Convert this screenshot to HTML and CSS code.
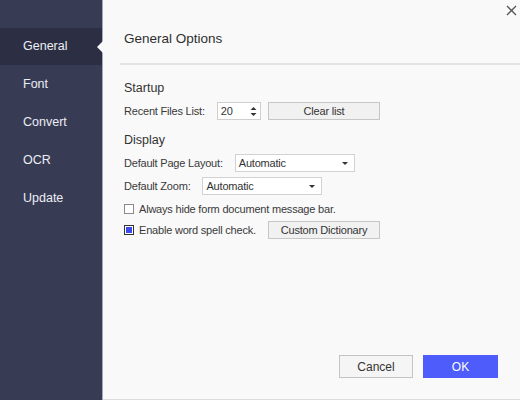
FILE: index.html
```html
<!DOCTYPE html>
<html>
<head>
<meta charset="utf-8">
<link rel="stylesheet" href="styles.css">
</head>
<body>
<div class="dialog">
  <nav class="sidebar">
    <div class="nav-item active">General</div>
    <div class="nav-item">Font</div>
    <div class="nav-item">Convert</div>
    <div class="nav-item">OCR</div>
    <div class="nav-item">Update</div>
  </nav>
  <main class="main">
    <button class="close" aria-label="Close">
      <svg width="11" height="11" viewBox="0 0 11 11"><path d="M1 1L10 10M10 1L1 10" stroke="#555" stroke-width="1.3" fill="none"/></svg>
    </button>
    <header class="header">General Options</header>
    <section class="content">
      <div class="section-title first">Startup</div>
      <div class="row split">
        <div class="cell">
          <span class="label">Recent Files List:</span>
          <div class="spinner">
            <span>20</span>
            <span class="arrows">
              <svg width="7" height="11" viewBox="0 0 7 11"><path d="M3.5 1L6.5 4H0.5Z M3.5 10L6.5 7H0.5Z" fill="#333"/></svg>
            </span>
          </div>
        </div>
        <button class="btn">Clear list</button>
      </div>
      <div class="section-title">Display</div>
      <div class="row r-layout">
        <span class="label">Default Page Layout:</span>
        <div class="select w-layout">Automatic<span class="caret"></span></div>
      </div>
      <div class="row r-zoom">
        <span class="label">Default Zoom:</span>
        <div class="select w-zoom">Automatic<span class="caret"></span></div>
      </div>
      <div class="row r-check1">
        <span class="checkbox"></span>
        <span class="label">Always hide form document message bar.</span>
      </div>
      <div class="row split r-check2">
        <div class="cell">
          <span class="checkbox checked"></span>
          <span class="label">Enable word spell check.</span>
        </div>
        <button class="btn">Custom Dictionary</button>
      </div>
    </section>
    <footer class="footer">
      <button class="btn-lg cancel">Cancel</button>
      <button class="btn-lg ok">OK</button>
    </footer>
  </main>
</div>
</body>
</html>
```
FILE: styles.css
```css
* { box-sizing: border-box; }
html, body { margin: 0; padding: 0; }
body {
  width: 520px;
  height: 400px;
  overflow: hidden;
  font-family: "Liberation Sans", Arial, sans-serif;
  background: #f9f9f9;
}
.dialog {
  display: flex;
  width: 520px;
  height: 400px;
}
.sidebar {
  width: 103px;
  flex: none;
  background: #383b54;
  border-right: 1px solid #a6a9bb;
  padding-top: 28px;
}
.nav-item {
  position: relative;
  height: 38px;
  line-height: 37px;
  padding-left: 23px;
  color: #eceef5;
  font-size: 12.5px;
}
.nav-item.active {
  background: #2c2e44;
  height: 37px;
  margin-bottom: 1px;
}
.nav-item.active::after {
  content: "";
  position: absolute;
  right: -1px;
  top: 13px;
  border-top: 6px solid transparent;
  border-bottom: 6px solid transparent;
  border-right: 6px solid #f9f9f9;
}
.main {
  position: relative;
  flex: 1;
  display: flex;
  flex-direction: column;
  padding-left: 17px;
  border-bottom: 1px solid #dcdcdc;
  color: #333;
}
.close {
  position: absolute;
  right: 2px;
  top: 4px;
  width: 13px;
  height: 13px;
  padding: 1px;
  border: 0;
  background: transparent;
  display: flex;
}
.header {
  height: 65px;
  padding-left: 4px;
  padding-top: 31px;
  font-size: 13.5px;
  color: #2f2f2f;
  border-bottom: 2px solid #e2e2e2;
}
.content {
  padding-left: 4px;
  display: flex;
  flex-direction: column;
  font-size: 11px;
  letter-spacing: -0.2px;
}
.section-title {
  font-size: 12.5px;
  line-height: 16px;
  height: 16px;
  margin-top: 12px;
  letter-spacing: 0;
  color: #333;
}
.section-title.first { margin-top: 15px; }
.row {
  display: flex;
  align-items: center;
  height: 18px;
  margin-top: 6px;
}
.r-layout { margin-top: 6px; }
.r-zoom { margin-top: 5px; }
.r-check1 { margin-top: 5px; }
.r-check2 { margin-top: 3px; }
.split {
  display: grid;
  grid-template-columns: 144px 112px;
}
.cell {
  display: flex;
  align-items: center;
  height: 18px;
}
.label {
  color: #3a3a3a;
  white-space: nowrap;
}
.spinner {
  margin-left: 12px;
  width: 44px;
  height: 18px;
  border: 1px solid #cfcfcf;
  background: #fff;
  display: flex;
  align-items: center;
  justify-content: space-between;
  padding: 0 3px 0 3px;
  color: #333;
}
.arrows { display: flex; }
.btn {
  height: 18px;
  width: 112px;
  border: 1px solid #c6c6c6;
  background: #f1f1f1;
  font-family: inherit;
  font-size: 11px;
  letter-spacing: -0.2px;
  color: #333;
  padding: 0;
}
.select {
  position: relative;
  height: 18px;
  margin-left: 12px;
  border: 1px solid #d2d2d2;
  background: #fff;
  padding-left: 3px;
  line-height: 16px;
  color: #333;
}
.w-layout { width: 120px; }
.w-zoom { width: 120px; }
.caret {
  position: absolute;
  right: 6px;
  top: 7px;
  border-left: 3px solid transparent;
  border-right: 3px solid transparent;
  border-top: 3px solid #333;
}
.checkbox {
  width: 10px;
  height: 10px;
  border: 1px solid #8a8a8a;
  background: #fff;
  margin-right: 5px;
  flex: none;
}
.checkbox.checked {
  border-color: #333;
  background: #3b4bef;
  box-shadow: inset 0 0 0 1px #fff;
}
.footer {
  margin-top: auto;
  display: flex;
  justify-content: flex-end;
  gap: 10px;
  padding-right: 22px;
  padding-bottom: 21px;
}
.btn-lg {
  height: 23px;
  width: 75px;
  font-family: inherit;
  font-size: 12px;
  padding: 0;
}
.cancel {
  width: 74px;
  background: #f5f5f5;
  border: 1px solid #c4c4c4;
  color: #333;
}
.ok {
  background: #4d5cfb;
  border: 1px solid #4d5cfb;
  color: #fff;
}
```
